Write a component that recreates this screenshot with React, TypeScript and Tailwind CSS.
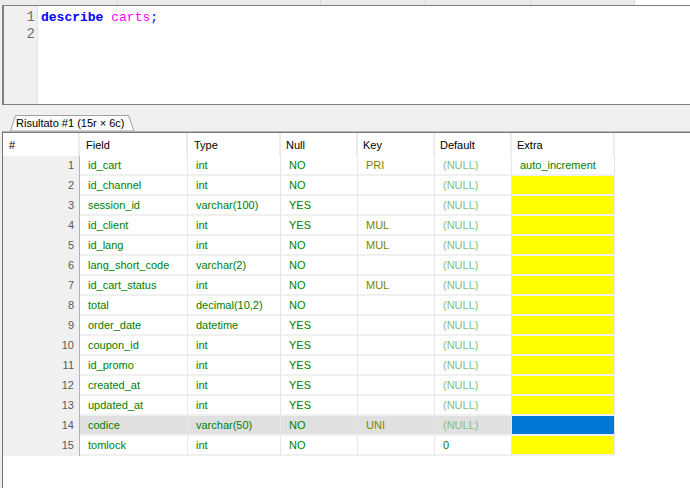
import React from "react";

type Row = [number, string, string, string, string, string, string | null];

const rows: Row[] = [
  [1, "id_cart", "int", "NO", "PRI", "(NULL)", "auto_increment"],
  [2, "id_channel", "int", "NO", "", "(NULL)", null],
  [3, "session_id", "varchar(100)", "YES", "", "(NULL)", null],
  [4, "id_client", "int", "YES", "MUL", "(NULL)", null],
  [5, "id_lang", "int", "NO", "MUL", "(NULL)", null],
  [6, "lang_short_code", "varchar(2)", "NO", "", "(NULL)", null],
  [7, "id_cart_status", "int", "NO", "MUL", "(NULL)", null],
  [8, "total", "decimal(10,2)", "NO", "", "(NULL)", null],
  [9, "order_date", "datetime", "YES", "", "(NULL)", null],
  [10, "coupon_id", "int", "YES", "", "(NULL)", null],
  [11, "id_promo", "int", "YES", "", "(NULL)", null],
  [12, "created_at", "int", "YES", "", "(NULL)", null],
  [13, "updated_at", "int", "YES", "", "(NULL)", null],
  [14, "codice", "varchar(50)", "NO", "UNI", "(NULL)", null],
  [15, "tomlock", "int", "NO", "", "0", null],
];

function Tab() {
  return (
    <div className="relative ml-[8px] h-[17px] w-[128px]">
      <svg className="absolute inset-0" width="128" height="17" viewBox="0 0 128 17">
        <path d="M2.5 17 L7.5 1.5 L120.5 1.5 L126 17 Z" fill="#fbfbfb" stroke="#a0a0a0" strokeWidth="1" />
      </svg>
      <div className="relative pl-[8px] pt-[2px] text-[11px] leading-[14px] text-black whitespace-nowrap">
        Risultato #1 (15r × 6c)
      </div>
    </div>
  );
}

export default function App() {
  const cellBase = "h-[20px] shrink-0 border-b-2 border-b-[#f0f0f0] border-r border-r-[#e6e6e6] pl-[8px] leading-[18px] whitespace-nowrap overflow-hidden";
  return (
    <div className="w-[690px] h-[488px] overflow-hidden bg-[#f0f0f0] flex flex-col" style={{ fontFamily: '"Liberation Sans", Arial, sans-serif' }}>
      {/* top strip */}
      <div className="h-[5px] flex bg-white shrink-0">
        <div className="w-[118px] bg-[#ececec] border-r border-[#d8d8d8]" />
        <div className="w-[203px] bg-[#ececec] border-r border-[#d8d8d8]" />
        <div className="w-[105px] bg-[#ececec] border-r border-[#d8d8d8]" />
        <div className="w-[105px] bg-[#ececec] border-r border-[#d8d8d8]" />
        <div className="w-[104px] bg-[#ececec] border-r border-[#d8d8d8]" />
      </div>
      {/* editor */}
      <div className="ml-[2px] h-[100px] shrink-0 flex bg-white border-t border-b border-l-2 border-[#7e7e7e]">
        <div className="w-[34px] bg-[#f0f0f0] border-r border-[#e2e2e2] pt-[3px] pr-[2px] text-right text-[14px] leading-[17px] text-[#707070]" style={{ fontFamily: '"Liberation Mono", monospace' }}>
          <div>1</div>
          <div>2</div>
        </div>
        <div className="pl-[3px] pt-[3px] text-[13px] leading-[17px]" style={{ fontFamily: '"Liberation Mono", monospace' }}>
          <div className="whitespace-pre">
            <span className="font-bold text-[#0000ff]">describe</span>
            <span> </span>
            <span className="text-[#ff00ff]">carts</span>
            <span className="text-[#0000ff]">;</span>
          </div>
        </div>
      </div>
      {/* tab area */}
      <div className="h-[26px] shrink-0 flex items-end">
        <Tab />
      </div>
      <div className="h-[2px] shrink-0 ml-[2px] border-t border-[#b4b4b4] bg-[#7c7c7c]" />
      {/* table */}
      <div className="ml-[2px] flex-1 bg-white border-l border-[#707070] text-[11px]">
        {/* header */}
        <div className="flex h-[23px] leading-[24px] text-black">
          <div className="w-[77px] shrink-0 pl-[6px] border-r-2 border-[#ececec]">#</div>
          <div className="w-[108px] shrink-0 pl-[6px] border-r-2 border-[#ececec]">Field</div>
          <div className="w-[93px] shrink-0 pl-[6px] border-r-2 border-[#ececec]">Type</div>
          <div className="w-[77px] shrink-0 pl-[5px] border-r-2 border-[#ececec]">Null</div>
          <div className="w-[77px] shrink-0 pl-[5px] border-r-2 border-[#ececec]">Key</div>
          <div className="w-[77px] shrink-0 pl-[5px] border-r-2 border-[#ececec]">Default</div>
          <div className="w-[103px] shrink-0 pl-[5px] border-r-2 border-[#ececec]">Extra</div>
        </div>
        {rows.map((r) => {
          const sel = r[0] === 14;
          const rowBg = sel ? "bg-[#e0e0e0]" : "bg-white";
          const extraBg = sel ? "bg-[#0078d7]" : r[6] ? "bg-white" : "bg-[#ffff00]";
          return (
            <div key={r[0]} className="flex h-[20px]">
              <div className="w-[77px] h-[20px] shrink-0 bg-[#f0f0f0] border-r border-[#aab2d2] pr-[5px] text-right leading-[18px] text-[#5a5a5a]">
                {r[0]}
              </div>
              <div className={`${cellBase} w-[108px] ${rowBg} text-[#008000]`}>{r[1]}</div>
              <div className={`${cellBase} w-[93px] ${rowBg} text-[#008000]`}>{r[2]}</div>
              <div className={`${cellBase} w-[77px] ${rowBg} text-[#008000]`}>{r[3]}</div>
              <div className={`${cellBase} w-[77px] ${rowBg} text-[#808000]`}>{r[4]}</div>
              <div className={`${cellBase} w-[77px] ${rowBg} ${r[5] === "(NULL)" ? "text-[#7fbf7f]" : "text-[#008000]"}`}>{r[5]}</div>
              <div className={`${cellBase} w-[103px] ${extraBg} text-[#008000]`}>{r[6] ?? ""}</div>
            </div>
          );
        })}
      </div>
    </div>
  );
}
